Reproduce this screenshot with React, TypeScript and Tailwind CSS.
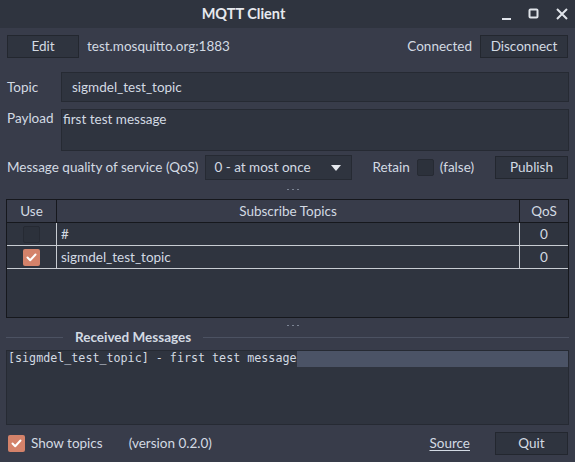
const Check = ({ on }: { on?: boolean }) =>
  on ? (
    <span className="flex h-[17px] w-[17px] items-center justify-center rounded-[2px] bg-[#d4826a]">
      <svg width="11" height="9" viewBox="0 0 11 9" fill="none">
        <path d="M1.5 4.5 L4.2 7.2 L9.5 1.5" stroke="white" strokeWidth="2" strokeLinecap="round" strokeLinejoin="round" />
      </svg>
    </span>
  ) : (
    <span className="block h-[17px] w-[17px] rounded-[2px] border border-[#262a33] bg-[#2c313b]" />
  );

const Btn = ({ label, w }: { label: string; w: string }) => (
  <button className={`${w} h-[23px] border border-[#23272f] bg-[#2f343f] text-[13.5px] text-[#d3dae3]`}>
    {label}
  </button>
);

const Dots = () => (
  <div className="flex h-[10px] items-center justify-center gap-[3px] pl-[10px]">
    <span className="h-[1px] w-[2px] bg-[#7c8494]" />
    <span className="h-[1px] w-[2px] bg-[#7c8494]" />
    <span className="h-[1px] w-[2px] bg-[#7c8494]" />
  </div>
);

export default function App() {
  return (
    <div
      className="flex h-[462px] w-[575px] flex-col bg-[#383c4a] text-[13.5px] text-[#d3dae3]"
      style={{ fontFamily: "Lato, 'Noto Sans', sans-serif" }}
    >
      {/* barra de título */}
      <div className="relative flex h-[28px] shrink-0 items-center justify-center bg-[#2f343f] pr-[88px]">
        <span className="text-[14.5px] font-bold text-[#e6e9ee]">MQTT Client</span>
        <div className="absolute right-[6px] top-0 flex h-[28px] items-center gap-[14px] text-[#e0e4ea]">
          <svg width="14" height="14" viewBox="0 0 14 14">
            <rect x="3" y="11" width="9" height="2" fill="currentColor" />
          </svg>
          <svg width="14" height="14" viewBox="0 0 14 14" fill="none">
            <rect x="2.5" y="2.5" width="8" height="8" rx="1" stroke="currentColor" strokeWidth="2" />
          </svg>
          <svg width="14" height="14" viewBox="0 0 14 14" fill="none">
            <path d="M2 2 L12 12 M12 2 L2 12" stroke="currentColor" strokeWidth="2" />
          </svg>
        </div>
      </div>

      <div className="flex flex-1 flex-col px-[6px]">
        {/* conexión */}
        <div className="mt-[7px] flex h-[23px] items-center pl-[1px] pr-[1px]">
          <Btn label="Edit" w="w-[72px]" />
          <span className="ml-[8px]">test.mosquitto.org:1883</span>
          <span className="ml-auto mr-[8px]">Connected</span>
          <Btn label="Disconnect" w="w-[88px]" />
        </div>

        {/* topic */}
        <div className="mt-[14px] flex items-center">
          <span className="w-[55px] pl-[1px]">Topic</span>
          <div className="flex h-[30px] flex-1 items-center border border-[#262a33] bg-[#2f343f] pl-[10px]">
            sigmdel_test_topic
          </div>
        </div>

        {/* payload */}
        <div className="mt-[7px] flex leading-[16px]">
          <span className="w-[55px] pt-[1px] pl-[1px]">Payload</span>
          <div className="h-[42px] flex-1 border border-[#262a33] bg-[#2f343f] pl-[1px] pt-[1px]">
            first test message
          </div>
        </div>

        {/* QoS */}
        <div className="mt-[4px] flex h-[25px] items-center">
          <span className="pl-[1px]">Message quality of service (QoS)</span>
          <div className="ml-[7px] flex h-[25px] w-[147px] items-center justify-between border border-[#262a33] bg-[#2f343f] pl-[8px] pr-[10px]">
            <span>0 - at most once</span>
            <svg width="10" height="6" viewBox="0 0 10 6">
              <path d="M0 0 L10 0 L5 6 Z" fill="#e6e9ee" />
            </svg>
          </div>
          <span className="ml-[20px]">Retain</span>
          <span className="ml-[7px]">
            <Check />
          </span>
          <span className="ml-[6px]">(false)</span>
          <span className="ml-auto mr-[1px]">
            <Btn label="Publish" w="w-[73px]" />
          </span>
        </div>

        <div className="mt-[4px]">
          <Dots />
        </div>

        {/* tabla de suscripciones */}
        <div className="mt-[5px] h-[119px] border border-[#16181d] bg-[#2f343f]">
          <div className="flex h-[23px] border-b border-[#16181d] bg-[#383c4a]">
            <div className="flex w-[50px] items-center justify-center border-r border-[#16181d]">Use</div>
            <div className="flex flex-1 items-center justify-center">Subscribe Topics</div>
            <div className="flex w-[49px] items-center justify-center border-l border-[#16181d]">QoS</div>
          </div>
          <div className="flex h-[23px] border-b border-[#c8ccd2]">
            <div className="flex w-[50px] items-center justify-center border-r border-[#c8ccd2]">
              <Check />
            </div>
            <div className="flex flex-1 items-center pl-[4px]">#</div>
            <div className="flex w-[49px] items-center justify-center border-l border-[#c8ccd2]">0</div>
          </div>
          <div className="flex h-[23px] border-b border-[#c8ccd2]">
            <div className="flex w-[50px] items-center justify-center border-r border-[#c8ccd2]">
              <Check on />
            </div>
            <div className="flex flex-1 items-center pl-[4px]">sigmdel_test_topic</div>
            <div className="flex w-[49px] items-center justify-center border-l border-[#c8ccd2]">0</div>
          </div>
        </div>

        <div className="mt-[2px]">
          <Dots />
        </div>

        {/* mensajes recibidos */}
        <div className="flex h-[14px] items-center">
          <span className="h-[1px] w-[57px] bg-[#4c5262]" />
          <span className="px-[12px] font-bold text-[#d3dae3]">Received Messages</span>
          <span className="h-[1px] flex-1 bg-[#4c5262]" />
        </div>
        <div
          className="mt-[6px] h-[75px] border border-[#262a33] bg-[#2f343f] text-[11.7px]"
          style={{ fontFamily: "'DejaVu Sans Mono', 'Liberation Mono', monospace" }}
        >
          <div className="flex h-[16px] items-center">
            <span className="whitespace-pre pl-[1px]">[sigmdel_test_topic] - first test message</span>
            <span className="h-[16px] flex-1 bg-[#4b5366]" />
          </div>
        </div>

        {/* pie */}
        <div className="mt-[7px] flex h-[23px] items-center">
          <span className="ml-[2px]">
            <Check on />
          </span>
          <span className="ml-[6px]">Show topics</span>
          <span className="ml-[26px]">(version 0.2.0)</span>
          <span className="ml-auto mr-[25px] underline underline-offset-2">Source</span>
          <span className="mr-[1px]">
            <Btn label="Quit" w="w-[73px]" />
          </span>
        </div>
      </div>
    </div>
  );
}
